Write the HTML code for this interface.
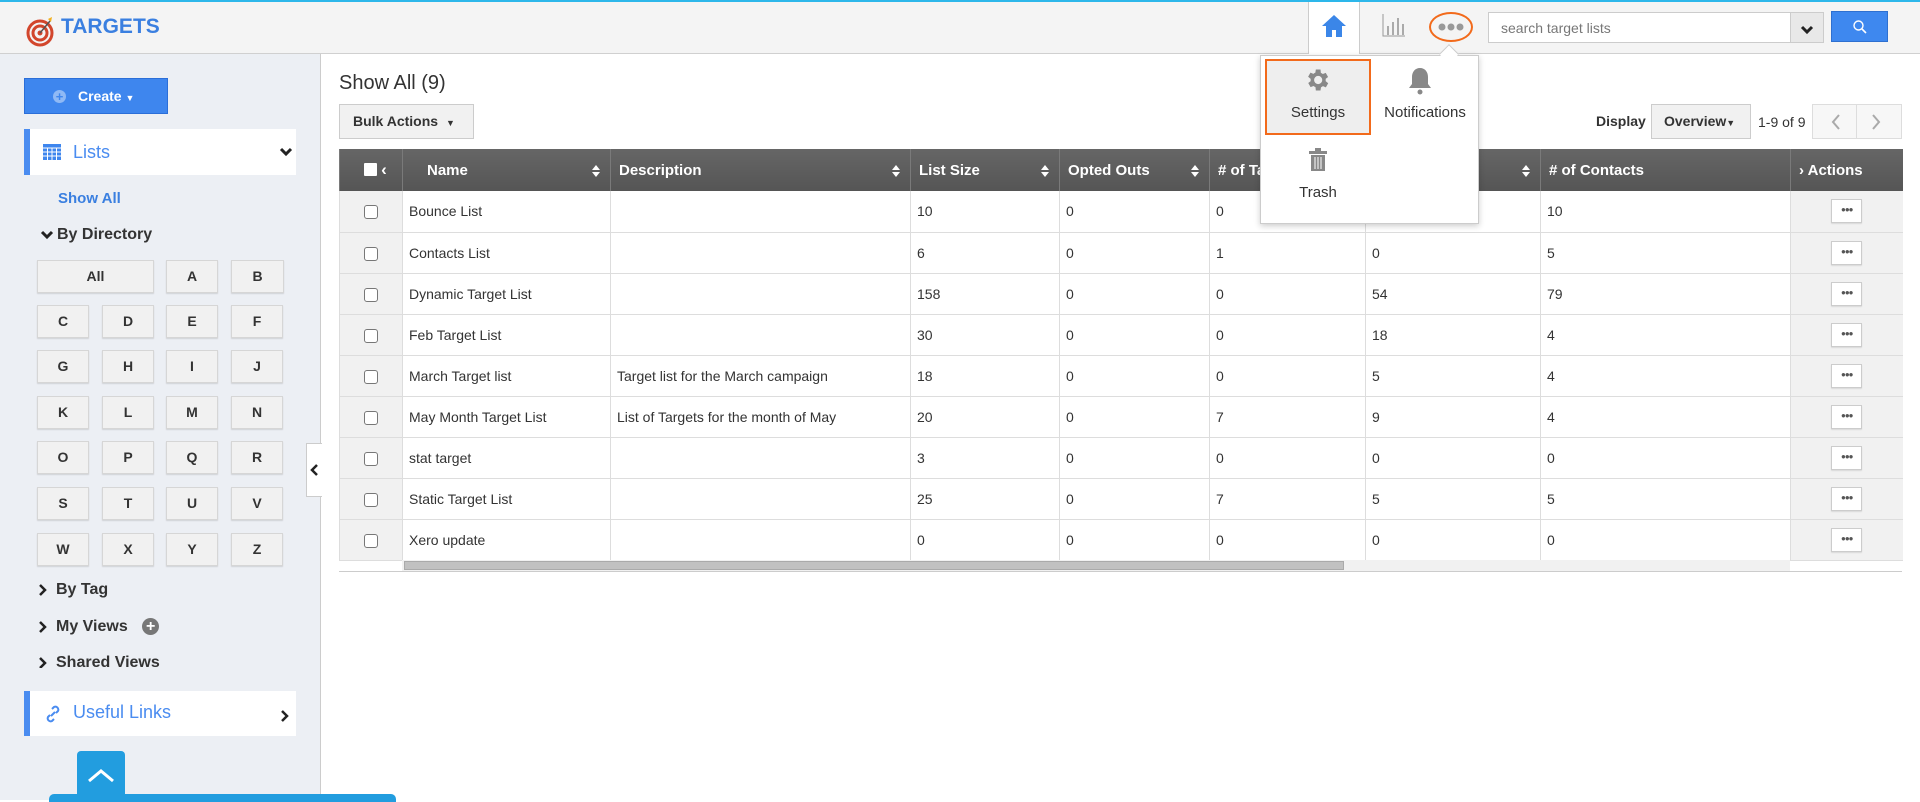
<!DOCTYPE html>
<html><head><meta charset="utf-8"><style>
*{box-sizing:border-box;margin:0;padding:0}
body{width:1920px;height:800px;overflow:hidden;font-family:"Liberation Sans",Arial,sans-serif;background:#fff;position:relative;color:#333}
.a{position:absolute}
.hdr{left:0;top:0;width:1920px;height:54px;background:#f4f4f4;border-top:2px solid #2db7ea;border-bottom:1px solid #d0d0d0}
.side{left:0;top:54px;width:321px;height:746px;background:#eceff4;border-right:1px solid #ccc}
.lb{position:absolute;height:33px;background:#f1f1f1;border:1px solid #d6d6d6;box-shadow:0 1px 1px rgba(0,0,0,.12);font-size:14px;font-weight:bold;text-align:center;line-height:31px;color:#333}
.nav{position:absolute;left:39px;font-size:16px;font-weight:bold;color:#333}
table{border-collapse:collapse;position:absolute;left:339px;top:149px;width:1563px;font-size:14px;table-layout:fixed}
th{height:42px;background:linear-gradient(#666,#555);color:#fff;text-align:left;font-size:15px;padding-left:8px;border-left:1px solid #7a7a7a;position:relative}
td{height:41px;border-bottom:1px solid #ddd;border-left:1px solid #ddd;padding-left:6px;color:#333}
td.cb{background:#f1f1f1;text-align:center;padding:0}
td.ac{background:#f1f1f1;text-align:center;padding:0}
.chk{display:inline-block;width:14px;height:14px;border:1px solid #777;border-radius:3px;background:#fff;vertical-align:middle}
.dots{display:inline-block;width:31px;height:24px;border:1px solid #ccc;background:#fff;font-size:8px;line-height:20px;color:#555;letter-spacing:-1px;box-shadow:0 1px 1px rgba(0,0,0,.1)}
.sort{position:absolute;right:10px;top:16px;width:8px;height:12px}
</style></head><body>
<div class="a hdr"></div>
<svg class="a" style="left:26px;top:15px" width="30" height="32" viewBox="0 0 30 32"><circle cx="14" cy="18" r="12" fill="none" stroke="#d2462c" stroke-width="3"/><circle cx="14" cy="18" r="7" fill="none" stroke="#d2462c" stroke-width="3"/><circle cx="14" cy="18" r="2.5" fill="#d2462c"/><path d="M14 18 L24 6" stroke="#555" stroke-width="1.5"/><path d="M22 4 l4 -2 l-1 5z" fill="#f2b01e"/></svg>
<div class="a" style="left:61px;top:15px;font-size:21px;font-weight:bold;color:#3a7fe0">TARGETS</div>
<div class="a" style="left:1308px;top:2px;width:52px;height:52px;background:#fff;border-left:1px solid #ccc;border-right:1px solid #ccc"></div>
<svg class="a" style="left:1321px;top:13px" width="26" height="26" viewBox="0 0 26 26"><path d="M13 2 L1 13 h4 v11 h6 v-7 h4 v7 h6 V13 h4z" fill="#3b86e8"/></svg>
<svg class="a" style="left:1381px;top:14px" width="26" height="24" viewBox="0 0 26 24"><path d="M2 0v22h22" stroke="#999" fill="none"/><rect x="6" y="12" width="2" height="9" fill="#aaa"/><rect x="11" y="8" width="2" height="13" fill="#aaa"/><rect x="16" y="4" width="2" height="17" fill="#aaa"/><rect x="21" y="10" width="2" height="11" fill="#aaa"/></svg>
<div class="a" style="left:1429px;top:12px;width:44px;height:30px;border:2px solid #f26a1b;border-radius:50%"></div>
<svg class="a" style="left:1437px;top:22px" width="28" height="10"><circle cx="5" cy="5" r="3.5" fill="#999"/><circle cx="14" cy="5" r="3.5" fill="#999"/><circle cx="23" cy="5" r="3.5" fill="#999"/></svg>
<div class="a" style="left:1488px;top:12px;width:336px;height:31px;border:1px solid #ccc;background:#fff;font-size:14px;color:#777;padding:7px 12px">search target lists</div>
<div class="a" style="left:1790px;top:12px;width:34px;height:31px;background:#e8e8e8;border:1px solid #ccc;text-align:center;padding-top:9px"><svg width="14" height="10" viewBox="0 0 14 10"><path d="M2 2l5 5 5-5" stroke="#222" stroke-width="3" fill="none"/></svg></div>
<div class="a" style="left:1831px;top:11px;width:57px;height:31px;background:#3e88ef;border:1px solid #2e70d0;text-align:center;padding-top:7px"><svg width="16" height="16" viewBox="0 0 16 16"><circle cx="6.5" cy="6.5" r="4.5" stroke="#fff" stroke-width="1.4" fill="none"/><path d="M10 10l4 4" stroke="#fff" stroke-width="1.6"/></svg></div>

<div class="a side"></div>
<div class="a" style="left:24px;top:78px;width:144px;height:36px;background:#3e86ee;border:1px solid #2b6ed8;color:#fff;font-size:14px;font-weight:bold;line-height:34px;padding-left:28px"><span style="display:inline-block;width:13px;height:13px;border-radius:50%;background:#8fb9f5;color:#3e86ee;font-size:13px;line-height:13px;text-align:center;margin-right:12px">+</span>Create <span style="font-size:9px">▼</span></div>
<div class="a" style="left:24px;top:129px;width:272px;height:46px;background:#fff;border-left:6px solid #4a8cf0"></div>
<svg class="a" style="left:43px;top:144px" width="18" height="16" viewBox="0 0 18 16"><rect x="0" y="0" width="18" height="16" fill="#3e86ee"/><path d="M0 4h18M0 8h18M0 12h18M4.5 4v12M9 4v12M13.5 4v12" stroke="#fff" stroke-width="1"/></svg>
<div class="a" style="left:73px;top:142px;font-size:18px;color:#4a8cf0">Lists</div>
<svg class="a" style="left:279px;top:147px" width="14" height="10"><path d="M2 2l5 5 5-5" stroke="#222" stroke-width="3" fill="none"/></svg>
<div class="a" style="left:58px;top:190px;font-size:15px;font-weight:bold;color:#3a7fe0">Show All</div>
<div class="nav" style="top:226px;left:57px">By Directory</div>
<svg class="a" style="left:40px;top:230px" width="14" height="10"><path d="M2 2l5 5 5-5" stroke="#222" stroke-width="3" fill="none"/></svg>
<div class="lb" style="left:37px;top:260px;width:117px">All</div>
<div class="lb" style="left:166px;top:260px;width:52px">A</div>
<div class="lb" style="left:231px;top:260px;width:53px">B</div>
<div id="grid"></div>
<div class="nav" style="top:581px;left:56px">By Tag</div>
<div class="nav" style="top:618px;left:56px">My Views <span style="display:inline-block;width:17px;height:17px;border-radius:50%;background:#777;color:#fff;font-size:16px;line-height:17px;text-align:center;vertical-align:middle;margin-left:10px">+</span></div>
<div class="nav" style="top:654px;left:56px">Shared Views</div>
<svg class="a" style="left:38px;top:583px" width="10" height="85"><path d="M2 2l5 5-5 5M2 39l5 5-5 5M2 75l5 5-5 5" stroke="#222" stroke-width="2.5" fill="none"/></svg>
<div class="a" style="left:24px;top:691px;width:272px;height:45px;background:#fff;border-left:6px solid #4a8cf0"></div>
<svg class="a" style="left:44px;top:705px" width="18" height="18" viewBox="0 0 18 18"><path d="M7 11l4-4M8 4l2-2a3 3 0 014 4l-2 2M10 14l-2 2a3 3 0 01-4-4l2-2" stroke="#4a8cf0" stroke-width="2" fill="none"/></svg>
<div class="a" style="left:73px;top:702px;font-size:18px;color:#4a8cf0">Useful Links</div>
<svg class="a" style="left:280px;top:709px" width="10" height="14"><path d="M2 2l5 5-5 5" stroke="#222" stroke-width="2.5" fill="none"/></svg>
<div class="a" style="left:77px;top:751px;width:48px;height:49px;background:#229ddf;border-radius:4px 4px 0 0"></div>
<svg class="a" style="left:87px;top:768px" width="28" height="16"><path d="M2 13l12-10 12 10" stroke="#fff" stroke-width="3" fill="none"/></svg>
<div class="a" style="left:49px;top:794px;width:347px;height:8px;background:#229ddf;border-radius:5px 5px 0 0"></div>
<div class="a" style="left:306px;top:443px;width:16px;height:54px;background:#fff;border:1px solid #ccc;border-right:none"></div>
<svg class="a" style="left:309px;top:463px" width="10" height="14"><path d="M8 2l-5 5 5 5" stroke="#222" stroke-width="2.5" fill="none"/></svg>

<div class="a" style="left:339px;top:72px;font-size:20px;color:#333">Show All (9)</div>
<div class="a" style="left:339px;top:104px;width:135px;height:35px;background:#f1f1f1;border:1px solid #ccc;font-size:14px;font-weight:bold;line-height:33px;padding-left:13px">Bulk Actions <span style="font-size:9px;margin-left:4px">▼</span></div>
<div class="a" style="left:1596px;top:113px;font-size:14px;font-weight:bold">Display</div>
<div class="a" style="left:1651px;top:104px;width:100px;height:35px;background:#f1f1f1;border:1px solid #ccc;font-size:14px;font-weight:bold;line-height:33px;padding-left:12px">Overview<span style="font-size:9px">▼</span></div>
<div class="a" style="left:1758px;top:114px;font-size:14px">1-9 of 9</div>
<div class="a" style="left:1812px;top:104px;width:90px;height:35px;border:1px solid #ddd;background:#f7f7f7"></div>
<div class="a" style="left:1856px;top:104px;width:1px;height:35px;background:#ddd"></div>
<svg class="a" style="left:1829px;top:113px" width="60" height="18"><path d="M10 2l-6 7 6 7M44 2l6 7-6 7" stroke="#aaa" stroke-width="2" fill="none"/></svg>

<table>
<colgroup><col style="width:63px"><col style="width:208px"><col style="width:300px"><col style="width:149px"><col style="width:150px"><col style="width:156px"><col style="width:175px"><col style="width:250px"><col style="width:112px"></colgroup>
<tr><th style="padding-left:24px"><span class="chk" style="border-radius:1px;border-color:#fff;width:13px;height:13px"></span> <span style="vertical-align:top;font-size:17px">‹</span></th><th style="padding-left:24px">Name<svg class="sort"><path d="M0 5l4-5 4 5zM0 7l4 5 4-5z" fill="#fff"/></svg></th><th>Description<svg class="sort"><path d="M0 5l4-5 4 5zM0 7l4 5 4-5z" fill="#fff"/></svg></th><th>List Size<svg class="sort"><path d="M0 5l4-5 4 5zM0 7l4 5 4-5z" fill="#fff"/></svg></th><th>Opted Outs<svg class="sort"><path d="M0 5l4-5 4 5zM0 7l4 5 4-5z" fill="#fff"/></svg></th><th># of Targets<svg class="sort"><path d="M0 5l4-5 4 5zM0 7l4 5 4-5z" fill="#fff"/></svg></th><th># of Leads<svg class="sort"><path d="M0 5l4-5 4 5zM0 7l4 5 4-5z" fill="#fff"/></svg></th><th># of Contacts</th><th>› Actions</th></tr>
<tr><td class="cb"><span class="chk"></span></td><td>Bounce List</td><td></td><td>10</td><td>0</td><td>0</td><td>0</td><td>10</td><td class="ac"><span class="dots">●●●</span></td></tr>
<tr><td class="cb"><span class="chk"></span></td><td>Contacts List</td><td></td><td>6</td><td>0</td><td>1</td><td>0</td><td>5</td><td class="ac"><span class="dots">●●●</span></td></tr>
<tr><td class="cb"><span class="chk"></span></td><td>Dynamic Target List</td><td></td><td>158</td><td>0</td><td>0</td><td>54</td><td>79</td><td class="ac"><span class="dots">●●●</span></td></tr>
<tr><td class="cb"><span class="chk"></span></td><td>Feb Target List</td><td></td><td>30</td><td>0</td><td>0</td><td>18</td><td>4</td><td class="ac"><span class="dots">●●●</span></td></tr>
<tr><td class="cb"><span class="chk"></span></td><td>March Target list</td><td>Target list for the March campaign</td><td>18</td><td>0</td><td>0</td><td>5</td><td>4</td><td class="ac"><span class="dots">●●●</span></td></tr>
<tr><td class="cb"><span class="chk"></span></td><td>May Month Target List</td><td>List of Targets for the month of May</td><td>20</td><td>0</td><td>7</td><td>9</td><td>4</td><td class="ac"><span class="dots">●●●</span></td></tr>
<tr><td class="cb"><span class="chk"></span></td><td>stat target</td><td></td><td>3</td><td>0</td><td>0</td><td>0</td><td>0</td><td class="ac"><span class="dots">●●●</span></td></tr>
<tr><td class="cb"><span class="chk"></span></td><td>Static Target List</td><td></td><td>25</td><td>0</td><td>7</td><td>5</td><td>5</td><td class="ac"><span class="dots">●●●</span></td></tr>
<tr><td class="cb"><span class="chk"></span></td><td>Xero update</td><td></td><td>0</td><td>0</td><td>0</td><td>0</td><td>0</td><td class="ac"><span class="dots">●●●</span></td></tr>
</table>
<div class="a" style="left:402px;top:560px;width:1388px;height:11px;background:#f1f1f1"></div>
<div class="a" style="left:404px;top:561px;width:940px;height:9px;background:#c1c1c1;border:1px solid #aaa"></div>
<div class="a" style="left:339px;top:571px;width:1563px;height:1px;background:#ccc"></div>

<div class="a" style="left:1260px;top:55px;width:219px;height:169px;background:#fff;border:1px solid #ccc;box-shadow:0 2px 6px rgba(0,0,0,.2)"></div>
<div class="a" style="left:1442px;top:47px;width:14px;height:14px;background:#fff;border-left:1px solid #ccc;border-top:1px solid #ccc;transform:rotate(45deg)"></div>
<div class="a" style="left:1265px;top:59px;width:106px;height:76px;background:#eee;border:2px solid #f26a1b"></div>
<svg class="a" style="left:1303px;top:66px" width="28" height="28" viewBox="0 0 24 24"><path fill="#888" d="M19.4 13a7.5 7.5 0 000-2l2.1-1.6-2-3.5-2.5 1a7 7 0 00-1.7-1L15 3h-4l-.4 2.7a7 7 0 00-1.7 1l-2.5-1-2 3.5L6.6 11a7.5 7.5 0 000 2l-2.1 1.6 2 3.5 2.5-1a7 7 0 001.7 1L11 21h4l.4-2.7a7 7 0 001.7-1l2.5 1 2-3.5zM13 15.5A3.5 3.5 0 1113 8.5a3.5 3.5 0 010 7z"/></svg>
<div class="a" style="left:1265px;top:104px;width:106px;text-align:center;font-size:15px;color:#333">Settings</div>
<svg class="a" style="left:1407px;top:66px" width="26" height="30" viewBox="0 0 26 30"><path d="M13 2c-5 0-8 4-8 9v7l-3 4h22l-3-4v-7c0-5-3-9-8-9z" fill="#888"/><circle cx="13" cy="26" r="2.5" fill="#888"/></svg>
<div class="a" style="left:1375px;top:104px;width:100px;text-align:center;font-size:15px;color:#333">Notifications</div>
<svg class="a" style="left:1308px;top:148px" width="20" height="24" viewBox="0 0 20 24"><rect x="1" y="3" width="18" height="3" fill="#888"/><rect x="7" y="0" width="6" height="3" fill="#888"/><path d="M3 7h14v16H3z" fill="#888"/><path d="M7 9v12M10 9v12M13 9v12" stroke="#fff" stroke-width="1"/></svg>
<div class="a" style="left:1265px;top:184px;width:106px;text-align:center;font-size:15px;color:#333">Trash</div>

<script>
var L="CDEFGHIJKLMNOPQRSTUVWXYZ",xs=[37,102,166,231],ys=[305,350,396,441,487,533],h="";
for(var i=0;i<L.length;i++){h+='<div class="lb" style="left:'+xs[i%4]+'px;top:'+ys[Math.floor(i/4)]+'px;width:52px">'+L[i]+'</div>';}
document.getElementById("grid").innerHTML=h;
</script>
</body></html>
